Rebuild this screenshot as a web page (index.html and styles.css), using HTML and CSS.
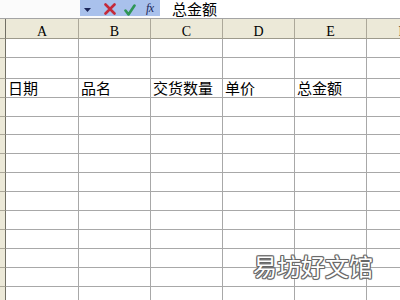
FILE: index.html
```html
<!DOCTYPE html>
<html lang="zh-CN">
<head>
<meta charset="utf-8">
<title>Sheet</title>
<link rel="stylesheet" href="styles.css">
</head>
<body>
<div class="app">
  <div class="fbar">
    <div class="namebox"></div>
    <div class="btns">
      <svg class="drop" width="7" height="4" viewBox="0 0 7 4"><polygon points="0,0 7,0 3.5,4" fill="#1b2559"/></svg>
      <svg class="cancel" width="12" height="12" viewBox="0 0 12 12"><path d="M1.5 1.5 L10.5 10.5 M10.5 1.5 L1.5 10.5" stroke="#c42a3a" stroke-width="2.6" stroke-linecap="round" fill="none"/></svg>
      <svg class="enter" width="12" height="12" viewBox="0 0 12 12"><path d="M1.5 6.5 L4.5 10.5 L10.5 1.5" stroke="#2f9656" stroke-width="2.6" stroke-linecap="round" stroke-linejoin="round" fill="none"/></svg>
      <span class="fx">fx</span>
    </div>
    <div class="ftext">总金额</div>
  </div>
  <div class="sheet">
    <div class="ch corner"></div><div class="ch">A</div><div class="ch">B</div><div class="ch">C</div><div class="ch">D</div><div class="ch">E</div><div class="ch">F</div>
    <div class="rh"></div><div class="c"></div><div class="c"></div><div class="c"></div><div class="c"></div><div class="c"></div><div class="c"></div>
    <div class="rh"></div><div class="c"></div><div class="c"></div><div class="c"></div><div class="c"></div><div class="c"></div><div class="c"></div>
    <div class="rh"></div><div class="c">日期</div><div class="c">品名</div><div class="c">交货数量</div><div class="c">单价</div><div class="c">总金额</div><div class="c"></div>
    <div class="rh"></div><div class="c"></div><div class="c"></div><div class="c"></div><div class="c"></div><div class="c"></div><div class="c"></div>
    <div class="rh"></div><div class="c"></div><div class="c"></div><div class="c"></div><div class="c"></div><div class="c"></div><div class="c"></div>
    <div class="rh"></div><div class="c"></div><div class="c"></div><div class="c"></div><div class="c"></div><div class="c"></div><div class="c"></div>
    <div class="rh"></div><div class="c"></div><div class="c"></div><div class="c"></div><div class="c"></div><div class="c"></div><div class="c"></div>
    <div class="rh"></div><div class="c"></div><div class="c"></div><div class="c"></div><div class="c"></div><div class="c"></div><div class="c"></div>
    <div class="rh"></div><div class="c"></div><div class="c"></div><div class="c"></div><div class="c"></div><div class="c"></div><div class="c"></div>
    <div class="rh"></div><div class="c"></div><div class="c"></div><div class="c"></div><div class="c"></div><div class="c"></div><div class="c"></div>
    <div class="rh"></div><div class="c"></div><div class="c"></div><div class="c"></div><div class="c"></div><div class="c"></div><div class="c"></div>
    <div class="rh"></div><div class="c"></div><div class="c"></div><div class="c"></div><div class="c"></div><div class="c"></div><div class="c"></div>
    <div class="rh"></div><div class="c"></div><div class="c"></div><div class="c"></div><div class="c"></div><div class="c"></div><div class="c"></div>
    <div class="rh"></div><div class="c"></div><div class="c"></div><div class="c"></div><div class="c"></div><div class="c"></div><div class="c"></div>
  </div>
  <div class="wm">易坊好文馆</div>
</div>
</body>
</html>
```
FILE: styles.css
```css
html, body {
  margin: 0;
  padding: 0;
  background: #ffffff;
}
.app {
  position: relative;
  width: 400px;
  height: 300px;
  overflow: hidden;
  font-family: "Noto Sans CJK SC", "Noto Sans", sans-serif;
  color: #000;
}
.fbar {
  display: flex;
  height: 18px;
  border-bottom: 1px solid #a4a4a4;
  background: #fbfbfb;
}
.namebox {
  width: 80px;
  flex: none;
}
.btns {
  width: 80px;
  height: 16px;
  flex: none;
  background: #a9c1ec;
  display: flex;
  align-items: center;
}
.drop {
  margin-left: 4px;
  margin-top: 3px;
}
.cancel {
  margin-left: 13px;
  margin-top: 2px;
}
.enter {
  margin-left: 8px;
  margin-top: 3px;
}
.fx {
  margin-left: 10px;
  font-family: "Liberation Serif", serif;
  font-style: italic;
  font-size: 12px;
  line-height: 16px;
  color: #1b2559;
  letter-spacing: -0.5px;
}
.ftext {
  padding-left: 12px;
  font-size: 15px;
  line-height: 18px;
  background: #ffffff;
  flex: 1;
}
.sheet {
  display: grid;
  grid-template-columns: 6px 73px 72px 72px 72px 72px 72px;
  grid-template-rows: 20px 19px 21px 19px 19px 18px repeat(9, 19px);
}
.ch {
  box-sizing: border-box;
  background: #ece9d8;
  border-right: 1px solid #aca899;
  border-bottom: 1px solid #9d9a8c;
  font-family: "Liberation Serif", serif;
  font-size: 14px;
  line-height: 18px;
  padding-top: 4px;
  text-align: center;
  white-space: nowrap;
}
.ch.corner {
  border-right: 1px solid #716f64;
}
.rh {
  box-sizing: border-box;
  background: #ece9d8;
  border-right: 1px solid #716f64;
  border-bottom: 1px solid #aca899;
}
.c {
  box-sizing: border-box;
  border-right: 1px solid #a8a8a8;
  border-bottom: 1px solid #a8a8a8;
  font-size: 15px;
  line-height: 17px;
  padding-left: 2px;
  white-space: nowrap;
  overflow: visible;
}
.wm {
  position: absolute;
  left: 253px;
  top: 252px;
  font-size: 24px;
  line-height: 28px;
  color: #ffffff;
  text-shadow: 1px 0 0 #666, -1px 0 0 #666, 0 1px 0 #666, 0 -1px 0 #666,
    1px 1px 0 #777, -1px -1px 0 #777, 1px -1px 0 #777, -1px 1px 0 #777,
    0 0 3px #ccc;
  white-space: nowrap;
}
```
